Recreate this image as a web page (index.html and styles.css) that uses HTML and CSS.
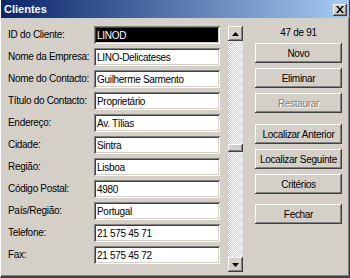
FILE: index.html
```html
<!DOCTYPE html>
<html lang="pt">
<head>
  <meta charset="UTF-8">
  <title>Clientes</title>
  <link rel="stylesheet" href="styles.css">
</head>
<body>
  <div class="janela">
    <div class="titulo">
      <span>Clientes</span>
      <div class="fechar-x">
        <svg width="8" height="7" viewBox="0 0 8 7"><path d="M0 0h2l2 2.5 2-2.5h2l-3 3.5 3 3.5h-2l-2-2.5-2 2.5h-2l3-3.5z" fill="#000"/></svg>
      </div>
    </div>

    <div class="conteudo">
      <div class="campos">
        <label>ID do Cliente:</label><div class="caixa selecionada">LINOD</div>
        <label>Nome da Empresa:</label><div class="caixa">LINO-Delicateses</div>
        <label>Nome do Contacto:</label><div class="caixa">Guilherme Sarmento</div>
        <label>Título do Contacto:</label><div class="caixa">Proprietário</div>
        <label>Endereço:</label><div class="caixa">Av. Tílias</div>
        <label>Cidade:</label><div class="caixa">Sintra</div>
        <label>Região:</label><div class="caixa">Lisboa</div>
        <label>Código Postal:</label><div class="caixa">4980</div>
        <label>País/Região:</label><div class="caixa">Portugal</div>
        <label>Telefone:</label><div class="caixa">21 575 45 71</div>
        <label>Fax:</label><div class="caixa">21 575 45 72</div>
      </div>

      <div class="rolagem">
        <div class="seta"><svg width="7" height="4" viewBox="0 0 7 4"><path d="M3.5 0L7 4H0z" fill="#000"/></svg></div>
        <div class="trilho"><div class="cursor"></div></div>
        <div class="seta"><svg width="7" height="4" viewBox="0 0 7 4"><path d="M0 0h7L3.5 4z" fill="#000"/></svg></div>
      </div>

      <div class="acoes">
        <div class="contador">47 de 91</div>
        <button>Novo</button>
        <button>Eliminar</button>
        <button class="inativo">Restaurar</button>
        <button class="separado">Localizar Anterior</button>
        <button>Localizar Seguinte</button>
        <button>Critérios</button>
        <button class="fim">Fechar</button>
      </div>
    </div>
  </div>
</body>
</html>
```

FILE: styles.css
```css
body {
  margin: 0;
  font-family: 'Liberation Sans', Arial, sans-serif;
  font-size: 10px;
  letter-spacing: -0.3px;
  color: #000;
}
.janela {
  width: 350px;
  height: 278px;
  box-sizing: border-box;
  background-color: #d4d0c8;
  border-left: 1px solid #fff;
  border-right: 1px solid #404040;
  border-bottom: 2px solid #404040;
  box-shadow: inset -1px -1px #808080;
  display: flex;
  flex-direction: column;
}
.titulo {
  height: 18px;
  background: linear-gradient(to right, #0a246a, #a6caf0);
  color: #fff;
  font-weight: bold;
  font-size: 11px;
  letter-spacing: 0;
  display: flex;
  align-items: center;
  justify-content: space-between;
  padding: 0 2px 0 3px;
}
.fechar-x {
  width: 14px;
  height: 12px;
  background-color: #d4d0c8;
  box-shadow: inset -1px -1px #404040, inset 1px 1px #fff, inset -2px -2px #808080;
  display: flex;
  align-items: center;
  justify-content: center;
  margin-top: 1px;
}
.conteudo {
  display: flex;
  padding: 8px 0 0 7px;
}
.campos {
  display: grid;
  grid-template-columns: 86px 126px;
  grid-auto-rows: 18px;
  row-gap: 4px;
  align-items: center;
}
.campos label {
  line-height: 18px;
  white-space: nowrap;
}
.caixa {
  height: 18px;
  box-sizing: border-box;
  background-color: #fff;
  box-shadow: inset 1px 1px #808080, inset -1px -1px #fff, inset 2px 2px #404040, inset -2px -2px #d4d0c8;
  padding: 2px 0 0 3px;
  line-height: 15px;
  white-space: nowrap;
  overflow: hidden;
}
.caixa.selecionada {
  background-color: #000;
  color: #fff;
}
.rolagem {
  width: 15px;
  height: 246px;
  margin-left: 8px;
  display: flex;
  flex-direction: column;
}
.seta {
  height: 15px;
  background-color: #d4d0c8;
  box-shadow: inset -1px -1px #404040, inset 1px 1px #fff, inset -2px -2px #808080;
  display: flex;
  align-items: center;
  justify-content: center;
}
.trilho {
  flex: 1;
  background: repeating-conic-gradient(#fff 0 25%, #d4d0c8 0 50%) 0 0 / 2px 2px;
  padding-top: 103px;
}
.cursor {
  height: 8px;
  background-color: #d4d0c8;
  box-shadow: inset -1px -1px #404040, inset 1px 1px #fff, inset -2px -2px #808080;
}
.acoes {
  width: 87px;
  margin-left: 12px;
  display: flex;
  flex-direction: column;
  gap: 5px;
}
.contador {
  height: 13px;
  margin-bottom: -1px;
  text-align: center;
  line-height: 13px;
}
button {
  height: 20px;
  font-family: inherit;
  font-size: 10px;
  letter-spacing: -0.3px;
  white-space: nowrap;
  color: #000;
  background-color: #d4d0c8;
  border: none;
  padding: 0;
  box-shadow: inset -1px -1px #404040, inset 1px 1px #fff, inset -2px -2px #808080, inset 2px 2px #d4d0c8;
}
button.inativo {
  color: #808080;
  text-shadow: 1px 1px #fff;
}
button.separado {
  margin-top: 6px;
}
button.fim {
  margin-top: 5px;
}
```
